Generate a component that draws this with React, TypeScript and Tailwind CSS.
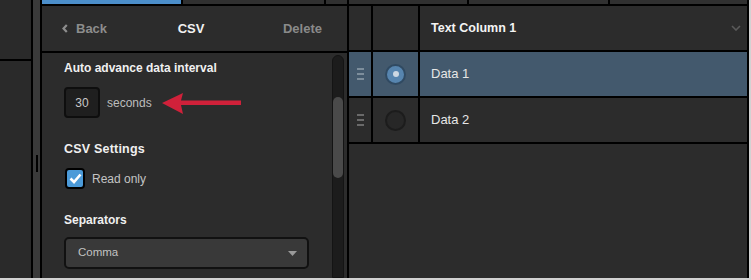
import React from "react";

function Handle({ color }: { color: string }) {
  return (
    <div className="flex flex-col gap-[3px] items-center">
      <div className="w-[7px] h-[2px]" style={{ background: color }} />
      <div className="w-[7px] h-[2px]" style={{ background: color }} />
      <div className="w-[7px] h-[2px]" style={{ background: color }} />
    </div>
  );
}

export default function App() {
  return (
    <div className="w-[751px] h-[280px] bg-[#d2d2d2] font-['Liberation_Sans',Arial,sans-serif]">
      <div className="flex w-[749px] h-[278px] bg-[#2c2c2c]">
        {/* far left column */}
        <div className="w-[31px] flex flex-col bg-[#2a2a2a]">
          <div className="h-[59px]" />
          <div className="h-[2px] bg-black" />
        </div>
        <div className="w-[2px] bg-black" />
        <div className="w-[7px] bg-[#3a3a3a] flex flex-col items-center pt-[155px]">
          <div className="w-[2px] h-[17px] bg-black" />
        </div>
        <div className="w-[2px] bg-black" />

        {/* CSV panel */}
        <div className="w-[305px] flex flex-col">
          <div className="h-[4px] flex">
            <div className="w-[139px] bg-[#4c8fcb]" />
            <div className="w-[2px] bg-black" />
            <div className="w-[141px] bg-[#303030]" />
            <div className="w-[2px] bg-black" />
            <div className="flex-1 bg-[#303030]" />
          </div>
          <div className="h-[2px] bg-black" />
          <div className="h-[45px] flex items-center pl-[20px] pr-[25px] text-[13px] font-bold">
            <div className="flex items-center gap-[8px] w-[90px] text-[#8d8d8d]">
              <svg width="6" height="9" viewBox="0 0 6 9">
                <path d="M4.8 1 L1.5 4.5 L4.8 8" stroke="#8d8d8d" strokeWidth="2.2" fill="none" />
              </svg>
              <span>Back</span>
            </div>
            <div className="flex-1 text-center text-[#f2f2f2] pr-[2px]">CSV</div>
            <div className="w-[90px] text-right text-[#8a8a8a]">Delete</div>
          </div>
          <div className="h-[2px] bg-black" />
          <div className="flex-1 flex">
            <div className="flex-1 pl-[22px] pt-[8px] flex flex-col">
              <div className="text-[12px] leading-[14px] font-bold text-[#f0f0f0]">
                Auto advance data interval
              </div>
              <div className="mt-[12px] flex items-center">
                <div className="w-[36px] h-[31px] rounded-[4px] border-2 border-[#0e0e0e] bg-[#1f1f1f] flex items-center justify-center text-[12px] text-[#c8c8c8]">
                  30
                </div>
                <span className="ml-[7px] text-[12px] text-[#bdbdbd]">seconds</span>
                <svg className="ml-[10px]" width="80" height="24" viewBox="0 0 80 24">
                  <path d="M0 12 L21 2 L19 9.5 L79 9.5 L79 14 L19 14 L21 23 Z" fill="#d0213a" />
                </svg>
              </div>
              <div className="mt-[24px] text-[12.5px] leading-[15px] font-bold text-[#f0f0f0] tracking-[0.2px]">
                CSV Settings
              </div>
              <div className="mt-[11px] flex items-center">
                <div className="w-[20px] h-[21px] ml-[1px] rounded-[4px] border-2 border-black bg-[#4b9ad8] flex items-center justify-center">
                  <svg width="13" height="11" viewBox="0 0 13 11">
                    <path d="M1.5 5.5 L5 9 L11.5 1.5" stroke="#fff" strokeWidth="2.6" fill="none" />
                  </svg>
                </div>
                <span className="ml-[7px] text-[12px] text-[#c4c4c4]">Read only</span>
              </div>
              <div className="mt-[24px] text-[12px] leading-[14px] font-bold text-[#f0f0f0]">
                Separators
              </div>
              <div className="mt-[10px] w-[245px] h-[32px] rounded-[5px] border-2 border-[#111] bg-[#393939] flex items-center justify-between pl-[12px] pr-[10px]">
                <span className="text-[11.5px] text-[#c2c2c2]">Comma</span>
                <svg width="9" height="5" viewBox="0 0 9 5">
                  <path d="M0 0 L9 0 L4.5 5 Z" fill="#9a9a9a" />
                </svg>
              </div>
            </div>
            <div className="w-[15px] pt-[2px]">
              <div className="w-[12px] h-full rounded-t-full bg-[#1c1c1c] border border-[#141414] pt-[41px] flex justify-center">
                <div className="w-[10px] h-[81px] rounded-full bg-[#4a4a4a]" />
              </div>
            </div>
          </div>
        </div>
        <div className="w-[2px] bg-black" />

        {/* table */}
        <div className="flex-1 flex flex-col">
          <div className="h-[4px] flex">
            <div className="w-[118px] bg-[#303030]" />
            <div className="w-[2px] bg-black" />
            <div className="w-[139px] bg-[#303030]" />
            <div className="w-[2px] bg-black" />
            <div className="flex-1 bg-[#303030]" />
          </div>
          <div className="h-[2px] bg-black" />
          <div className="h-[44px] flex">
            <div className="w-[22px]" />
            <div className="w-[2px] bg-black" />
            <div className="w-[45px]" />
            <div className="w-[2px] bg-black" />
            <div className="flex-1 flex items-center justify-between pl-[11px] pr-[6px]">
              <span className="text-[12.5px] font-bold text-[#f4f4f4]">Text Column 1</span>
              <svg width="10" height="6" viewBox="0 0 10 6">
                <path d="M1 1 L5 5 L9 1" stroke="#5a5a5a" strokeWidth="1.6" fill="none" />
              </svg>
            </div>
          </div>
          <div className="h-[2px] bg-black" />
          <div className="h-[44px] flex bg-[#43596d]">
            <div className="w-[22px] flex items-center justify-center">
              <Handle color="#7d8e9c" />
            </div>
            <div className="w-[2px] bg-black" />
            <div className="w-[45px] flex items-center justify-center">
              <div className="w-[21px] h-[21px] rounded-full bg-[#5785af] border-2 border-[#304a62] flex items-center justify-center">
                <div className="w-[6px] h-[6px] rounded-full bg-[#cdd8e3]" />
              </div>
            </div>
            <div className="w-[2px] bg-black" />
            <div className="flex-1 flex items-center pl-[11px] text-[13px] text-[#e6e6e6]">Data 1</div>
          </div>
          <div className="h-[2px] bg-black" />
          <div className="h-[44px] flex">
            <div className="w-[22px] flex items-center justify-center">
              <Handle color="#6a6a6a" />
            </div>
            <div className="w-[2px] bg-black" />
            <div className="w-[45px] flex items-center justify-center">
              <div className="w-[21px] h-[21px] rounded-full bg-[#272727] border-2 border-[#1c1c1c]" />
            </div>
            <div className="w-[2px] bg-black" />
            <div className="flex-1 flex items-center pl-[11px] text-[13px] text-[#e6e6e6]">Data 2</div>
          </div>
          <div className="h-[2px] bg-black" />
          <div className="flex-1" />
        </div>
        <div className="w-[2px] bg-black" />
      </div>
    </div>
  );
}
